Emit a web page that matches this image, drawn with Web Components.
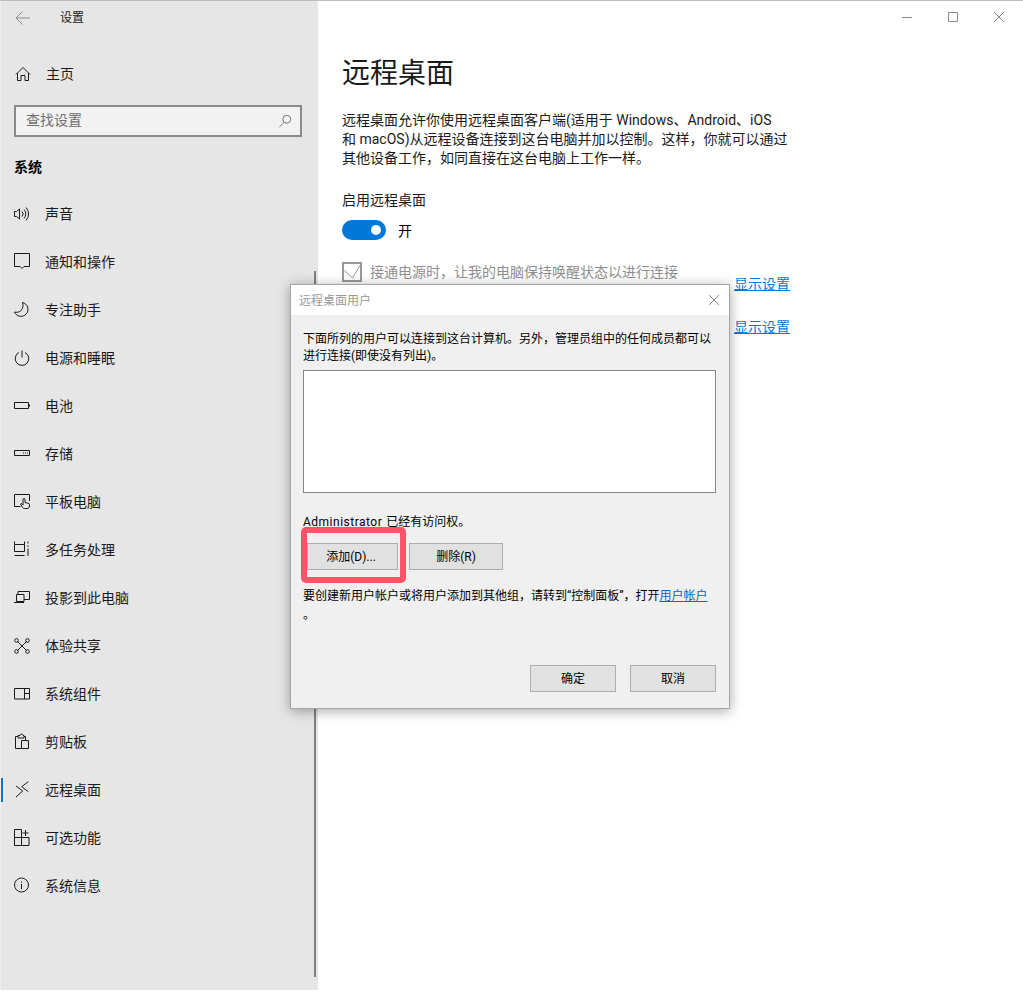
<!DOCTYPE html>
<html lang="zh">
<head>
<meta charset="utf-8">
<title>设置</title>
<style>
  html, body { margin: 0; padding: 0; background: #fff; }
  body { font-family: Roboto, "Noto Sans CJK SC", sans-serif; color: #000; }
</style>
</head>
<body>
<settings-window>
  <settings-sidebar slot="side">
    <nav-item icon="sound">声音</nav-item>
    <nav-item icon="note">通知和操作</nav-item>
    <nav-item icon="moon">专注助手</nav-item>
    <nav-item icon="power">电源和睡眠</nav-item>
    <nav-item icon="battery">电池</nav-item>
    <nav-item icon="storage">存储</nav-item>
    <nav-item icon="tablet">平板电脑</nav-item>
    <nav-item icon="multi">多任务处理</nav-item>
    <nav-item icon="project">投影到此电脑</nav-item>
    <nav-item icon="share">体验共享</nav-item>
    <nav-item icon="parts">系统组件</nav-item>
    <nav-item icon="clip">剪贴板</nav-item>
    <nav-item icon="remote" active>远程桌面</nav-item>
    <nav-item icon="optional">可选功能</nav-item>
    <nav-item icon="info">系统信息</nav-item>
  </settings-sidebar>
  <remote-page slot="main"></remote-page>
  <users-dialog slot="over"></users-dialog>
</settings-window>

<script>
const ICONS = {
  home: '<path d="M2 8.500l7-7 7 7M3.500 7v7.500H7v-5h4v5h3.500V7"/>',
  sound: '<path d="M.5 5.500h2L5.500 3v10l-3-2.500h-2zM8 5.500a3.500 3.500 0 0 1 0 5M10 3.500a6.500 6.500 0 0 1 0 9M12 1.500a9.500 9.500 0 0 1 0 13"/>',
  note: '<path d="M.5-.5h15v13H10l-2 2-2-2H.5z"/>',
  moon: '<path d="M8.500.5a7 7 0 1 1-8 9.500c2 .7 5 .3 6.800-1.700C9 6.300 9.500 3 8.500.5z"/>',
  power: '<path d="M5 2.500a6.800 6.800 0 1 0 6 0M8 .5v7"/>',
  battery: '<path d="M.5 4.500h14v6H.5zM15.500 6.500v2"/>',
  storage: '<path d="M.5 4.500h15v5H.5zM9 7h1M11 7h1M13 7h1"/>',
  tablet: '<path d="M6.500 12.500h-6V.5h15v6.500"/><path d="M10.500 14.500c-1.500 0-2-1-2.500-2l-1.500-2.500 1-.5 1.500 1.500V5.500a1 1 0 0 1 2 0v3l3 .7c.8.2 1.500.6 1.500 1.500V12c0 1.500-1 2.500-2.500 2.500z"/>',
  multi: '<path d="M.5-.5v3h10v-3M.5 2.500v7h10v-7M.5 13.500h10M14-.5v2M14 3.500v1.500M14 6.500v7.500"/>',
  project: '<path d="M4 4V1.500h11.500v8H10"/><path d="M2.500 4.500h7.500v7H2.500zM0 12.500h10"/>',
  share: '<path d="M3.500 3.500l9 9M12.500 3.500l-9 9"/><circle cx="2.500" cy="2.500" r="1.800"/><circle cx="13.500" cy="2.500" r="1.800"/><circle cx="2.500" cy="13.500" r="1.800"/><circle cx="13.500" cy="13.500" r="1.800"/>',
  parts: '<path d="M.5 2.500h15v10.500H.5zM10.500 2.500v10.500M10.500 7.500h5"/>',
  clip: '<path d="M4 2.500H1.500v12H7M11.500 6V2.500H10"/><path d="M4 1.500h2a1.500 1.500 0 0 1 3 0h1V4H4zM7.500 6.500h7v8h-7z"/>',
  remote: '<path d="M2 4l6.700 5L2 15M14.300-.3L7.700 4.700l6.600 5"/>',
  optional: '<path d="M.5-.5h7v16h-7zM.5 7.500h14.500v8H7.500M11.500 0v6M8.500 3h6"/>',
  info: '<circle cx="7.500" cy="7" r="7"/><path d="M7.500 6v5M7.500 3.500v1.200"/>'
};

function icon(name) {
  return `<svg viewBox="0 0 16 16" width="16" height="16" fill="none" stroke="#1a1a1a" stroke-width="1" style="overflow:visible;display:block;flex:none">${ICONS[name]}</svg>`;
}

class SettingsWindow extends HTMLElement {
  connectedCallback() {
    this.attachShadow({ mode: 'open' });
    this.shadowRoot.innerHTML = `
      <style>
        :host { display: block; position: relative; width: 1023px; height: 990px; box-sizing: border-box; border-top: 1px solid #bdbdbd; background: #fff; }
        .frame { display: flex; height: 100%; }
      </style>
      <div class="frame">
        <slot name="side"></slot>
        <slot name="main"></slot>
      </div>
      <slot name="over"></slot>
    `;
  }
}

class SettingsSidebar extends HTMLElement {
  connectedCallback() {
    this.attachShadow({ mode: 'open' });
    this.shadowRoot.innerHTML = `
      <style>
        :host { display: block; position: relative; flex: none; width: 318px; box-sizing: border-box; border-left: 1px solid #f0f0f0; background: #e6e6e6; font-size: 14px; color: #1a1a1a; }
        .head { display: flex; align-items: center; height: 33px; padding-left: 14px; }
        .head svg { flex: none; }
        .head span { margin-left: 29px; padding-bottom: 2px; font-size: 12px; }
        .home { display: flex; align-items: center; height: 48px; margin-top: 16px; padding-left: 13px; }
        .home span { margin-left: 16px; padding-bottom: 2px; }
        .search { display: flex; align-items: center; justify-content: space-between; box-sizing: border-box; width: 288px; height: 32px; margin: 7px 0 0 13px; padding: 0 8px 0 10px; border: 2px solid #8a8a8a; background: #f2f2f2; color: #707070; }
        .search span { padding-bottom: 4px; }
        h2 { margin: 0; padding: 20px 0 13px 13px; font-size: 14px; line-height: 20px; font-weight: 700; color: #000; }
        .scroll { position: absolute; left: 313px; top: 270px; width: 2px; height: 706px; background: #808080; }
      </style>
      <div class="head">
        <svg viewBox="0 0 16 16" width="16" height="16" fill="none" stroke="#8c8c8c"><path d="M1 8h14M7.500 1.500L1 8l6.500 6.500"/></svg>
        <span>设置</span>
      </div>
      <div class="home">${icon('home')}<span>主页</span></div>
      <div class="search">
        <span>查找设置</span>
        <svg viewBox="0 0 16 16" width="14" height="14" fill="none" stroke="#666"><circle cx="10" cy="6" r="4.500"/><path d="M7 9.500L1.500 15"/></svg>
      </div>
      <h2>系统</h2>
      <slot></slot>
      <div class="scroll"></div>
    `;
  }
}

class NavItem extends HTMLElement {
  connectedCallback() {
    this.attachShadow({ mode: 'open' });
    this.shadowRoot.innerHTML = `
      <style>
        :host { display: flex; align-items: center; position: relative; height: 48px; padding-left: 13px; color: #1a1a1a; }
        :host([active])::before { content: ""; position: absolute; left: 0; top: 12px; width: 2px; height: 24px; background: #0078d7; }
        span { margin-left: 15px; padding-bottom: 2px; }
      </style>
      ${icon(this.getAttribute('icon'))}<span><slot></slot></span>
    `;
  }
}

class RemotePage extends HTMLElement {
  connectedCallback() {
    this.attachShadow({ mode: 'open' });
    this.shadowRoot.innerHTML = `
      <style>
        :host { display: block; flex: 1; min-width: 0; font-size: 14px; color: #000; }
        .controls { display: flex; justify-content: flex-end; height: 33px; padding-right: 1px; }
        .controls div { display: flex; align-items: center; justify-content: center; width: 46px; height: 32px; }
        .body { padding-left: 24px; }
        h1 { margin: 20px 0 0; font-size: 28px; line-height: 40px; font-weight: 400; color: #1a1a1a; }
        p { margin: 17px 0 0; width: 460px; line-height: 19px; color: #1a1a1a; }
        .label { margin-top: 22px; line-height: 20px; color: #1a1a1a; }
        .toggle-row { display: flex; align-items: center; margin-top: 10px; height: 20px; }
        .toggle { position: relative; width: 44px; height: 20px; border-radius: 10px; background: #0078d7; }
        .toggle::after { content: ""; position: absolute; right: 5px; top: 5px; width: 10px; height: 10px; border-radius: 50%; background: #fff; }
        .toggle-row span { margin-left: 12px; }
        .check-row { display: flex; align-items: center; margin-top: 22px; height: 20px; color: #8f8f8f; }
        .check-row svg { flex: none; margin-right: 8px; }
        .check-row span { padding-bottom: 2px; }
        a { display: block; margin: 0 0 0 392px; line-height: 20px; color: #0078d7; text-decoration: underline; }
        a.a1 { margin-top: -8px; }
        a.a2 { margin-top: 23px; }
      </style>
      <div class="controls">
        <div><svg width="10" height="10" stroke="#8a8a8a" fill="none"><path d="M0 5.500h10"/></svg></div>
        <div><svg width="10" height="10" stroke="#8a8a8a" fill="none"><path d="M.5.5h9v9h-9z"/></svg></div>
        <div><svg width="10" height="10" stroke="#8a8a8a" fill="none"><path d="M0 0l10 10M10 0L0 10"/></svg></div>
      </div>
      <div class="body">
        <h1>远程桌面</h1>
        <p>远程桌面允许你使用远程桌面客户端(适用于 Windows、Android、iOS<br>和 macOS)从远程设备连接到这台电脑并加以控制。这样，你就可以通过<br>其他设备工作，如同直接在这台电脑上工作一样。</p>
        <div class="label">启用远程桌面</div>
        <div class="toggle-row"><div class="toggle"></div><span>开</span></div>
        <div class="check-row">
          <svg width="20" height="20" fill="none" stroke="#9a9a9a"><path d="M1 1h18v18H1z" stroke-width="2"/><path d="M2.500 8.500l8 7.500L19.500 1" stroke-width="1"/></svg>
          <span>接通电源时，让我的电脑保持唤醒状态以进行连接</span>
        </div>
        <a class="a1" href="#">显示设置</a>
        <a class="a2" href="#">显示设置</a>
      </div>
    `;
  }
}

class DialogButton extends HTMLElement {
  connectedCallback() {
    this.attachShadow({ mode: 'open' });
    this.shadowRoot.innerHTML = `
      <style>
        :host { display: flex; align-items: center; justify-content: center; box-sizing: border-box; height: 27px; border: 1px solid #adadad; background: #e1e1e1; font-size: 12px; color: #000; }
        span { padding-bottom: 2px; }
      </style>
      <span><slot></slot></span>
    `;
  }
}

class UsersDialog extends HTMLElement {
  connectedCallback() {
    this.attachShadow({ mode: 'open' });
    this.shadowRoot.innerHTML = `
      <style>
        :host { display: block; position: absolute; left: 290px; top: 283px; box-sizing: border-box; width: 440px; height: 425px; border: 1px solid #a6a6a6; background: #f0f0f0; box-shadow: 0 2px 12px rgba(0,0,0,.35); font-size: 12px; color: #000; }
        .title { display: flex; align-items: center; justify-content: space-between; height: 30px; padding: 0 9px 0 8px; background: #fff; color: #999; }
        .title span { padding-bottom: 2px; }
        .body { padding: 16px 13px 0 12px; }
        .intro { margin: 0; line-height: 17px; }
        .list { height: 123px; box-sizing: border-box; margin-top: 5px; border: 1px solid #828790; background: #fff; }
        .who { margin: 21px 0 0; line-height: 17px; }
        .who span { letter-spacing: .5px; margin-right: 1px; }
        .row { display: flex; margin: 12px 0 0 4px; }
        .add { width: 91px; padding-right: 3px; }
        .del { width: 94px; margin-left: 11px; }
        .note { margin: 17px 0 0; line-height: 19px; }
        .note a { color: #0066cc; }
        .foot { display: flex; justify-content: flex-end; gap: 14px; margin-top: 40px; }
        .foot dialog-button { width: 86px; }
        .mark { position: absolute; left: 10px; top: 242px; box-sizing: border-box; width: 105px; height: 56px; border: 6px solid #ff5468; border-radius: 5px; }
      </style>
      <div class="title">
        <span>远程桌面用户</span>
        <svg width="12" height="12" fill="none" stroke="#8a8a8a"><path d="M1 1l10 10M11 1L1 11"/></svg>
      </div>
      <div class="body">
        <p class="intro">下面所列的用户可以连接到这台计算机。另外，管理员组中的任何成员都可以进行连接(即使没有列出)。</p>
        <div class="list"></div>
        <p class="who"><span>Administrator</span> 已经有访问权。</p>
        <div class="row">
          <dialog-button class="add">添加(D)...</dialog-button>
          <dialog-button class="del">删除(R)</dialog-button>
        </div>
        <p class="note">要创建新用户帐户或将用户添加到其他组，请转到“控制面板”，打开<a href="#">用户帐户</a><br>。</p>
        <div class="foot">
          <dialog-button>确定</dialog-button>
          <dialog-button>取消</dialog-button>
        </div>
      </div>
      <div class="mark"></div>
    `;
  }
}

customElements.define('settings-window', SettingsWindow);
customElements.define('settings-sidebar', SettingsSidebar);
customElements.define('nav-item', NavItem);
customElements.define('remote-page', RemotePage);
customElements.define('dialog-button', DialogButton);
customElements.define('users-dialog', UsersDialog);
</script>
</body>
</html>
